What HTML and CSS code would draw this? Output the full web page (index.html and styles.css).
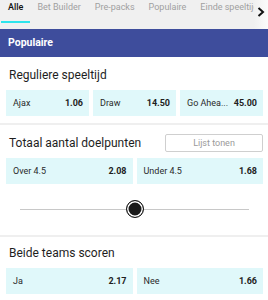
FILE: index.html
```html
<!DOCTYPE html>
<html>
<head>
<meta charset="utf-8">
<link rel="stylesheet" href="styles.css">
</head>
<body>
<div class="tabs">
  <div class="tab active">Alle</div>
  <div class="tab">Bet Builder</div>
  <div class="tab">Pre-packs</div>
  <div class="tab">Populaire</div>
  <div class="tab">Einde speeltijd</div>
  <div class="more"><svg width="8" height="10" viewBox="0 0 8 10"><path d="M1.5 1 L6 5 L1.5 9" fill="none" stroke="#111" stroke-width="2"/></svg></div>
</div>
<div class="band">Populaire</div>

<section class="market">
  <div class="head"><h2>Reguliere speeltijd</h2></div>
  <div class="odds three">
    <div class="cell"><span class="lab">Ajax</span><span class="val">1.06</span></div>
    <div class="cell"><span class="lab">Draw</span><span class="val">14.50</span></div>
    <div class="cell"><span class="lab">Go Ahea...</span><span class="val">45.00</span></div>
  </div>
</section>

<section class="market">
  <div class="head"><h2>Totaal aantal doelpunten</h2><button class="list">Lijst tonen</button></div>
  <div class="odds two">
    <div class="cell"><span class="lab">Over 4.5</span><span class="val">2.08</span></div>
    <div class="cell"><span class="lab">Under 4.5</span><span class="val">1.68</span></div>
  </div>
  <div class="slider"><div class="knob"></div></div>
</section>

<section class="market last">
  <div class="head"><h2>Beide teams scoren</h2></div>
  <div class="odds two">
    <div class="cell"><span class="lab">Ja</span><span class="val">2.17</span></div>
    <div class="cell"><span class="lab">Nee</span><span class="val">1.66</span></div>
  </div>
</section>
</body>
</html>
```

FILE: styles.css
```css
* { box-sizing: border-box; }
html, body { margin: 0; padding: 0; background: #fff; }
body { font-family: Roboto, "Liberation Sans", sans-serif; color: #222; width: 268px; overflow: hidden; }

.tabs {
  position: relative;
  height: 29px;
  background: #f0f0f0;
  display: flex;
  padding-left: 1px;
  white-space: nowrap;
  overflow: hidden;
}
.tab {
  padding: 1px 7px 0;
  font-size: 9px;
  line-height: 12px;
  color: #a0a0a0;
  flex: none;
}
.tab.active { color: #111; font-weight: 500; }
.tab.active::after {
  content: "";
  display: block;
  height: 2px;
  margin: 8px -7px 0 -7px;
  background: #2ee4ec;
}
.more {
  position: absolute;
  right: 0;
  top: 0;
  width: 14px;
  height: 29px;
  padding: 2px 0 0 3px;
  background: linear-gradient(to right, #f0f0f0 0%, #f7f7f7 60%, #fbfbfb 100%);
}

.band {
  height: 28px;
  background: #3e4d9c;
  color: #fff;
  font-weight: 700;
  font-size: 10.5px;
  line-height: 28px;
  padding-left: 8px;
}

.market {
  padding: 9px 5px 7px 6px;
  border-bottom: 2px solid #efefef;
}
.market.last { border-bottom: none; padding-top: 7px; }
.head {
  display: flex;
  justify-content: space-between;
  align-items: center;
  height: 18px;
  padding-left: 3px;
}
h2 {
  margin: 0;
  font-size: 12px;
  font-weight: 400;
  line-height: 18px;
  color: #1e1e1e;
}
.list {
  width: 98px;
  height: 18px;
  border: 1px solid #cfcfcf;
  border-radius: 2px;
  background: #fff;
  color: #9a9a9a;
  font-family: Roboto, "Liberation Sans", sans-serif;
  font-size: 9px;
  padding: 0;
}
.odds {
  display: grid;
  gap: 4px;
  margin-top: 6px;
}
.odds.three { grid-template-columns: repeat(3, 1fr); }
.odds.two { grid-template-columns: repeat(2, 1fr); }
.cell {
  height: 26px;
  background: #e0f8fa;
  display: flex;
  justify-content: space-between;
  align-items: center;
  padding: 0 6px 0 7px;
  font-size: 9px;
}
.lab { color: #2a2a2a; }
.val { font-weight: 700; color: #1e1e1e; }

.slider {
  position: relative;
  height: 24px;
  margin: 13px 14px 7px 14px;
  display: flex;
  align-items: center;
  justify-content: center;
}
.slider::before {
  content: "";
  position: absolute;
  left: 0;
  right: 0;
  top: 12px;
  height: 1px;
  background: #c8c8c8;
}
.knob {
  position: relative;
  width: 18px;
  height: 18px;
  border-radius: 50%;
  background: #1a1a1a;
  border: 1.5px solid #1a1a1a;
  box-shadow: inset 0 0 0 1.5px #fff;
}
```
